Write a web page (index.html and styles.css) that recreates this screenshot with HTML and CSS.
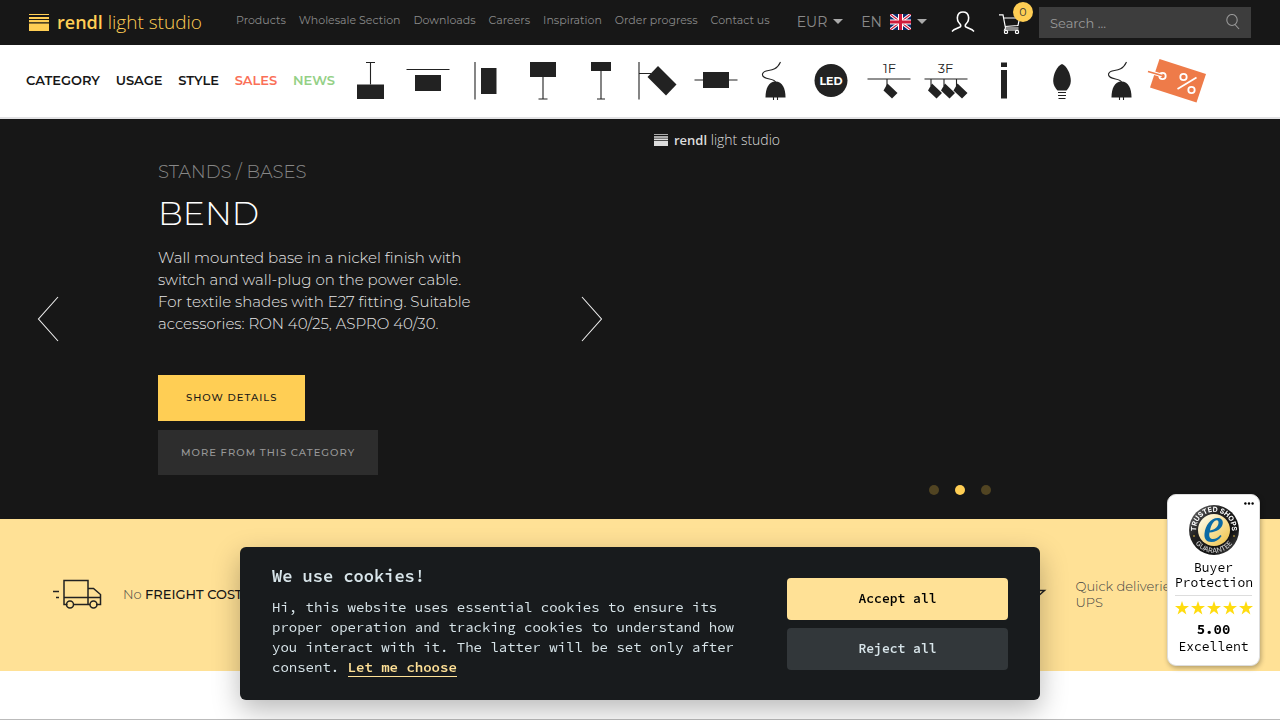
FILE: index.html
```html
<!DOCTYPE html>
<html lang="en">
<head>
<meta charset="utf-8">
<meta name="viewport" content="width=device-width, initial-scale=1">
<title>rendl light studio</title>
<link rel="stylesheet" href="styles.css">
</head>
<body>
<header class="topbar">
  <a class="logo" href="#">
    <svg class="logo-mark" viewBox="0 0 20 18" aria-hidden="true"><path d="M0 0h20v1H0zM0 3h20v2H0zM0 6h20v2.200H0zM0 9.500h20V17H0z"/></svg>
    <span><b>rendl</b> light studio</span>
  </a>
  <nav class="toplinks" aria-label="Secondary">
    <a href="#">Products</a><a href="#">Wholesale Section</a><a href="#">Downloads</a><a href="#">Careers</a><a href="#">Inspiration</a><a href="#">Order progress</a><a href="#">Contact us</a>
  </nav>
  <div class="tools">
    <button class="pick" type="button">EUR <i class="caret"></i></button>
    <button class="pick" type="button">EN
      <svg class="flag" viewBox="0 0 21 16" aria-hidden="true"><path fill="#0a2a6b" d="M0 0h21v16H0z"/><path stroke="#fff" stroke-width="3.200" d="M0 0l21 16M21 0L0 16"/><path stroke="#cf1b3b" stroke-width="1.200" d="M0 0l21 16M21 0L0 16"/><path stroke="#fff" stroke-width="5" d="M10.500 0v16M0 8h21"/><path stroke="#cf1b3b" stroke-width="3" d="M10.500 0v16M0 8h21"/></svg>
      <i class="caret"></i></button>
    <a class="user" href="#" aria-label="Account"><svg viewBox="0 0 24 22"><path d="M1 20.500l2-1.800 6-2.700c1-.6 1-1.800 0-3C6.500 10.500 6 8 6.500 5.500 7 2.500 9 1 12 1s5 1.500 5.500 4.500c.5 2.500 0 5-2.500 7.500-1 1.200-1 2.400 0 3l6 2.700 2 1.800"/></svg></a>
    <a class="cart" href="#" aria-label="Cart"><svg viewBox="0 0 22 20"><path d="M0 .800h4l2.500 13.200h13M4.700 4h15.800l-1.500 7.500-13 1M6.500 14l-1 2h14"/><circle cx="7" cy="18" r="1.600"/><circle cx="18" cy="18" r="1.600"/></svg><span class="count">0</span></a>
  </div>
  <form class="search">
    <input type="search" placeholder="Search ..." aria-label="Search">
    <button type="button" aria-label="Search"><svg viewBox="0 0 14 16"><ellipse cx="6" cy="6" rx="5.200" ry="5.500"/><path d="M9 10.500l4 4.500"/></svg></button>
  </form>
</header>

<nav class="menu" aria-label="Main">
  <div class="menu-text">
    <a href="#">CATEGORY</a><a href="#">USAGE</a><a href="#">STYLE</a><a class="sales" href="#">SALES</a><a class="news" href="#">NEWS</a>
  </div>
  <div class="menu-icons">
    <a href="#" aria-label="Pendant"><svg viewBox="0 0 56 52"><path d="M15 29.500h27V44H15z"/><path class="l" d="M24 7.500h9M28.500 7.500v22"/></svg></a>
    <a href="#" aria-label="Ceiling"><svg viewBox="0 0 56 52"><path d="M15 20h26v16H15z"/><path class="l" d="M6.500 14.500h43"/></svg></a>
    <a href="#" aria-label="Wall"><svg viewBox="0 0 56 52"><path d="M24 13h15.500v26H24z"/><path class="l" d="M18 7v37.500"/></svg></a>
    <a href="#" aria-label="Table"><svg viewBox="0 0 56 52"><path d="M15 7h26v15H15z"/><path class="l" d="M28 22v22M23.500 44h9"/></svg></a>
    <a href="#" aria-label="Floor"><svg viewBox="0 0 56 52"><path d="M18 7h20v9H18z"/><path class="l" d="M28 16v28M24 44h8"/></svg></a>
    <a href="#" aria-label="Spot"><svg viewBox="0 0 56 52"><path d="M28 11l18.500 18.500L36 40.500 17.500 22z"/><path class="l" d="M9 7v37.500M9 18.500h12"/></svg></a>
    <a href="#" aria-label="Recessed"><svg viewBox="0 0 56 52"><path d="M15 17h26v16H15z"/><path class="l" d="M6.500 25h43"/></svg></a>
    <a href="#" aria-label="Accessories"><svg viewBox="0 0 56 52"><path d="M19.500 42.500c0-9 3-16 10-16s10 7 10 16z"/><path class="l" d="M34.500 7c-6 13-16 5-18 12-1 6 12 4 13 8M27.500 42v3M31.500 42v3"/></svg></a>
    <a href="#" aria-label="LED"><svg viewBox="0 0 56 52"><circle cx="28" cy="25.500" r="16.500"/><text class="led" x="28" y="29.500">LED</text></svg></a>
    <a href="#" aria-label="Single phase track"><svg viewBox="0 0 56 52"><text class="phase" x="28.500" y="18">1F</text><path d="M26.500 28.500l10 9.500-5.500 5.500-8.500-8z"/><path class="l" d="M6.500 24h43M26 24v7"/></svg></a>
    <a href="#" aria-label="Three phase track"><svg viewBox="0 0 56 52"><text class="phase" x="26.500" y="18">3F</text><path d="M13 28.500l10 9.500-5.500 5.500-8.500-8zM26 28.500l10 9.500-5.500 5.500-8.500-8zM38.500 28.500l10 9.500-5.500 5.500-8.500-8z"/><path class="l" d="M5.500 24h43M12 24v7M25 24v7M37.500 24v7"/></svg></a>
    <a href="#" aria-label="Profiles"><svg viewBox="0 0 56 52"><path d="M25 7.500h6V12h-6zM25 15h6v28.500h-6z"/></svg></a>
    <a href="#" aria-label="Bulbs"><svg viewBox="0 0 56 52"><path d="M28 9c-5 2-8.800 10-8.800 17 0 4 2 7 4.300 9.500h9c2.300-2.500 4.300-5.500 4.300-9.500 0-7-3.800-15-8.800-17z"/><path class="l" d="M24 37.500h8M24 40.500h8M24.500 43.500h7"/></svg></a>
    <a href="#" aria-label="Cables"><svg viewBox="0 0 56 52"><path d="M19.500 42.500c0-9 3-16 10-16s10 7 10 16z"/><path class="l" d="M34.500 7c-6 13-16 5-18 12-1 6 12 4 13 8M27.500 42v3M31.500 42v3"/></svg></a>
    <a href="#" aria-label="Discounts"><svg class="tag" viewBox="0 0 56 52"><path d="M10.500 4L57 19l-9.500 28.500L1 32.500z"/><g fill="none" stroke="#fff" stroke-width="1.800"><circle cx="13.500" cy="21" r="3.200"/><circle cx="34.500" cy="22" r="3.200"/><circle cx="42.500" cy="35" r="3.200"/><path d="M47.500 22.500L28.500 34"/></g><path stroke="#fff" stroke-width="3.500" d="M3 17.500l10 3"/><path stroke="#ee7b49" stroke-width="1.600" d="M-1 16.500l14 4"/></svg></a>
  </div>
</nav>

<main>
  <section class="hero">
    <div class="slide">
      <button class="arrow" type="button" aria-label="Previous"><svg viewBox="0 0 22 46"><path d="M21 1L1.500 23 21 45"/></svg></button>
      <div class="copy">
        <h2>STANDS / BASES</h2>
        <h1>BEND</h1>
        <p>Wall mounted base in a nickel finish with switch and wall-plug on the power cable. For textile shades with E27 fitting. Suitable accessories: RON 40/25, ASPRO 40/30.</p>
        <a class="cta" href="#">SHOW DETAILS</a>
        <a class="cta more" href="#">MORE FROM THIS CATEGORY</a>
      </div>
      <button class="arrow" type="button" aria-label="Next"><svg viewBox="0 0 22 46"><path d="M1 1l19.500 22L1 45"/></svg></button>
    </div>
    <div class="stage">
      <div class="logo small">
        <svg class="logo-mark" viewBox="0 0 20 18" aria-hidden="true"><path d="M0 0h20v1H0zM0 3h20v2H0zM0 6h20v2.200H0zM0 9.500h20V17H0z"/></svg>
        <span><b>rendl</b> light studio</span>
      </div>
      <div class="dots"><button type="button" aria-label="Slide 1"></button><button class="on" type="button" aria-label="Slide 2"></button><button type="button" aria-label="Slide 3"></button></div>
    </div>
  </section>

  <section class="perks">
    <div class="perk">
      <svg viewBox="0 0 50 30"><path d="M15.500 25.500H12V1.500h24v24H21M36 9.500h5.500l7 6v10H44M36 25.500h2M12 18.500h36.500M1 12.500h6M4 18.500h3"/><circle cx="18" cy="25.500" r="3.500"/><circle cx="41.500" cy="25.500" r="3.500"/></svg>
      <p>No <b>FREIGHT COSTS</b></p>
    </div>
    <div class="perk last">
      <svg viewBox="0 0 50 30"><path d="M39.500 11.500H28L6 3l17 14-13 3 8 8 13-9z"/></svg>
      <p>Quick deliveries<br>UPS</p>
    </div>
  </section>
  <section class="next"></section>
</main>

<section class="cookies" role="dialog" aria-label="Cookie consent">
  <div class="cookie-copy">
    <h2>We use cookies!</h2>
    <p>Hi, this website uses essential cookies to ensure its proper operation and tracking cookies to understand how you interact with it. The latter will be set only after consent. <a href="#">Let me choose</a></p>
  </div>
  <div class="cookie-actions">
    <button class="accept" type="button">Accept all</button>
    <button type="button">Reject all</button>
  </div>
</section>

<aside class="trust">
  <button class="dots3" type="button" aria-label="More"><svg viewBox="0 0 10 3"><circle cx="1.400" cy="1.500" r="1.200"/><circle cx="5" cy="1.500" r="1.200"/><circle cx="8.600" cy="1.500" r="1.200"/></svg></button>
  <svg class="seal" viewBox="0 0 50 50" aria-hidden="true">
    <defs>
      <linearGradient id="ring" x2="1" y2="1"><stop offset="0" stop-color="#777"/><stop offset=".35" stop-color="#222"/><stop offset=".7" stop-color="#111"/><stop offset="1" stop-color="#555"/></linearGradient>
      <linearGradient id="gold" x2="1" y2="1"><stop offset=".1" stop-color="#fffbe6"/><stop offset="1" stop-color="#f0c03f"/></linearGradient>
      <path id="arcTop" d="M8.500 32A18 18 0 1 1 41.500 32"/>
      <path id="arcBottom" d="M3.800 33.500A22.800 22.800 0 0 0 46.200 33.500"/>
    </defs>
    <circle cx="25" cy="25" r="25" fill="url(#ring)"/>
    <circle cx="25" cy="25" r="16" fill="url(#gold)"/>
    <text class="seal-text"><textPath href="#arcTop" startOffset="50%">TRUSTED SHOPS</textPath></text>
    <text class="seal-text thin"><textPath href="#arcBottom" startOffset="50%">GUARANTEE</textPath></text>
    <circle cx="5" cy="31" r=".8" fill="#f3c948"/><circle cx="45" cy="31" r=".8" fill="#f3c948"/>
    <path fill="#0b6aa5" fill-rule="evenodd" d="M20.500 27.500c-1 4 .5 6.500 3.500 6.500 2.800 0 5.200-1.400 7.300-4l1.300 1C29.800 35 26.500 37 22.300 37 17.500 37 15 34 15.500 28.500 16.200 20.500 22 13 28.500 13c3.500 0 5.500 2 5.300 5-.4 5.500-6 9-13.300 9.500zM21 25.500c5-.7 8.300-4 8.500-7.500.1-1.700-.5-2.700-1.700-2.700-2.800 0-5.800 4.700-6.800 10.200z"/>
  </svg>
  <div class="trust-name">Buyer<br>Protection</div>
  <svg class="stars" viewBox="0 0 78 14" role="img" aria-label="5 stars"><defs><path id="star" d="M7 0l1.700 5H14L9.800 8.200l1.600 5.300L7 10.300l-4.400 3.200 1.600-5.300L0 5h5.300z"/></defs><use href="#star"/><use href="#star" x="16"/><use href="#star" x="32"/><use href="#star" x="48"/><use href="#star" x="64"/></svg>
  <div class="score"><b>5.00</b><br>Excellent</div>
</aside>
</body>
</html>
```
FILE: styles.css
```css
* { box-sizing: border-box; }
body { margin: 0; background: #fff; color: #171717; font-family: Montserrat, Inter, "Open Sans", sans-serif; }
a { color: inherit; text-decoration: none; }
button { font: inherit; color: inherit; background: none; border: 0; padding: 0; cursor: pointer; }
h1, h2, p { margin: 0; font-weight: 300; }
svg { display: block; }

.topbar { display: flex; align-items: center; height: 45px; padding: 0 29px; background: #171717; color: #8a8a8a; }
.logo { display: flex; align-items: center; gap: 8px; width: 207px; padding-bottom: 2px; color: #ffce54; font: 300 19px/24px "Open Sans", "Noto Sans", sans-serif; white-space: nowrap; }
.logo b { font-size: 18px; font-weight: 600; }
.logo-mark { width: 20px; height: 18px; margin-top: 2px; fill: currentColor; }
.toplinks { display: flex; gap: 13px; font-size: 11px; line-height: 16px; padding-bottom: 6px; white-space: nowrap; }
.tools { display: flex; align-items: center; gap: 18px; margin-left: auto; }
.pick { display: flex; align-items: center; gap: 6px; padding-bottom: 2px; font-size: 14px; }
.caret { border: 5px solid transparent; border-top-color: #aaa; border-bottom: 0; }
.flag { width: 21px; height: 16px; margin-left: 2px; }
.user svg { width: 24px; height: 22px; margin: 0 6px 2px; fill: none; stroke: #fff; stroke-width: 1.6; }
.cart { position: relative; }
.cart svg { width: 22px; height: 20px; margin-top: 2px; fill: none; stroke: #fff; stroke-width: 1.2; }
.count { position: absolute; left: 14px; top: -10px; width: 20px; height: 20px; border-radius: 50%; background: #ffce54; color: #333; font-size: 11px; line-height: 20px; text-align: center; }
.search { display: flex; align-items: center; width: 212px; height: 31px; margin-left: 18px; padding: 0 11px; background: #3d3d3d; }
.search input { flex: 1; min-width: 0; padding: 0; border: 0; outline: 0; background: none; color: #aaa; font: 13px Montserrat, Inter, sans-serif; }
.search input::placeholder { color: #999; }
.search svg { width: 14px; height: 16px; margin-bottom: 2px; fill: none; stroke: #999; stroke-width: 1.1; }

.menu { display: flex; align-items: center; height: 74px; padding: 0 74px 0 26px; border-bottom: 2px solid #e2e2e4; background: #fff; }
.menu-text { display: flex; justify-content: space-between; width: 309px; margin-right: 6px; padding-bottom: 2px; font-size: 13px; font-weight: 600; }
.sales { color: #fa6f57; }
.news { color: #94d086; }
.menu-icons { display: flex; flex: 1; }
.menu-icons a { display: flex; flex: 1; justify-content: center; min-width: 0; }
.menu-icons svg { flex: none; width: 56px; height: 52px; overflow: visible; fill: #222; }
.menu-icons .l { fill: none; stroke: #222; stroke-width: 1.1; }
.menu-icons .tag { fill: #ee7b49; }
.led { fill: #fff; font: 700 11px Montserrat, Inter, sans-serif; text-anchor: middle; }
.phase { font: 400 13px Montserrat, Inter, sans-serif; text-anchor: middle; }

.hero { display: grid; grid-template-columns: 1fr 1fr; min-height: 400px; background: #171717; color: #e8e8e8; }
.slide { display: flex; align-items: center; justify-content: space-between; padding: 0 37px; }
.arrow svg { width: 22px; height: 46px; fill: none; stroke: #eee; stroke-width: 1.1; }
.copy { align-self: flex-start; width: 324px; padding-top: 40px; }
.slide .copy { margin-right: auto; margin-left: 99px; }
.copy h2 { color: #888; font-size: 18px; line-height: 26px; }
.copy h1 { color: #fff; font-size: 33px; line-height: 44px; margin: 6px 0 12px; }
.copy p { font-size: 15px; line-height: 22px; margin-bottom: 40px; }
.cta { display: table; padding: 0 28px; background: #ffce54; color: #171717; font-size: 10px; font-weight: 500; line-height: 46px; letter-spacing: 1px; }
.more { margin-top: 9px; padding: 0 23px; background: #2d2d2d; color: #999; line-height: 45px; }
.stage { display: flex; flex-direction: column; justify-content: space-between; padding: 10px 14px 24px; }
.small { gap: 6px; width: auto; padding: 0; color: #ddd; font-size: 14px; line-height: 22px; }
.small b { font-size: 13px; }
.small .logo-mark { width: 14px; height: 13px; margin: 0; }
.dots { display: flex; gap: 16px; justify-content: center; }
.dots button { width: 10px; height: 10px; border-radius: 50%; background: #514422; }
.dots .on { background: #ffce54; }

.perks { display: grid; grid-template-columns: repeat(4, 1fr); align-items: center; min-height: 152px; padding: 0 5px 2px; background: #ffe196; color: #444; font-size: 13px; line-height: 16px; white-space: nowrap; }
.perk { display: flex; align-items: center; gap: 21px; padding-left: 47px; }
.perk svg { width: 50px; height: 30px; fill: none; stroke: #222; stroke-width: 1.5; }
.perk b { color: #171717; font-weight: 500; }
.last { grid-column: 4; }
.next { height: 49px; border-bottom: 1px solid #bbb; }

.cookies { position: fixed; left: 50%; bottom: 20px; transform: translateX(-50%); display: flex; align-items: center; justify-content: space-between; width: 800px; height: 153px; padding: 0 32px; border-radius: 6px; background: #181b1d; color: #d8e5ea; box-shadow: 0 10px 28px rgba(2, 2, 3, .28); font-family: "Source Code Pro", "Noto Sans Mono CJK SC", "Liberation Mono", monospace; }
.cookie-copy { width: 465px; padding-bottom: 6px; }
.cookie-copy h2 { font-size: 17px; font-weight: 600; line-height: 24px; margin-bottom: 9px; }
.cookie-copy p { font-size: 14px; font-weight: 400; line-height: 20px; }
.cookie-copy a { color: #ffe196; font-weight: 600; border-bottom: 1px solid; }
.cookie-actions { display: grid; gap: 8px; width: 221px; }
.cookie-actions button { height: 42px; border-radius: 4px; background: #32373a; font-size: 13px; font-weight: 600; }
.cookie-actions .accept { background: #ffe196; color: #000; }

.trust { position: fixed; right: 20px; bottom: 54px; display: flex; flex-direction: column; align-items: center; width: 93px; height: 172px; padding: 10px 7px; border: 1px solid #ddd; border-radius: 9px; background: #fff; color: #000; box-shadow: 1px 2px 5px rgba(0, 0, 0, .3); font: 13px/15px "Source Code Pro", "Noto Sans Mono CJK SC", "Liberation Mono", monospace; text-align: center; }
.dots3 { position: absolute; right: 5px; top: 7px; }
.dots3 svg { width: 10px; height: 3px; }
.seal { width: 50px; height: 50px; margin-bottom: 5px; flex: none; }
.seal-text { fill: #fff; font: 700 7px Inter, sans-serif; text-anchor: middle; }
.thin { fill: #ccc; font-weight: 500; }
.trust-name { align-self: stretch; padding-bottom: 5px; border-bottom: 1px solid #ddd; }
.stars { width: 78px; height: 14px; margin: 5px 0 6px; fill: #ffdc0f; flex: none; }
.score { line-height: 17px; }
.score b { font-size: 14px; }
```
